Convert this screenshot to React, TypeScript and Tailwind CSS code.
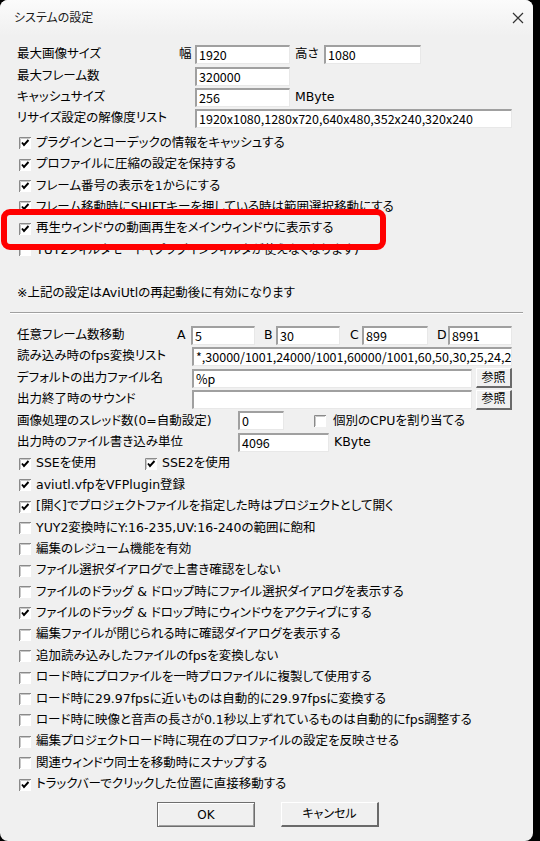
import React from "react";

const Edit = ({ w, value }: { w: string; value?: string }) => (
  <div
    className={`h-[19px] shrink-0 overflow-hidden whitespace-nowrap border-t-2 border-l-2 border-r border-b border-t-[#a0a0a0] border-l-[#a0a0a0] border-r-[#e8e8e8] border-b-[#e8e8e8] bg-white pl-[2px] font-['Noto_Sans_CJK_JP',sans-serif] text-[12.5px] leading-[16px] ${w}`}
  >
    {value}
  </div>
);

const Check = ({ checked }: { checked?: boolean }) => (
  <svg width="12" height="12" viewBox="0 0 12 12" className="shrink-0">
    <rect x="0" y="0" width="12" height="12" fill="#ffffff" />
    <path d="M0.5 12V0.5H12" fill="none" stroke="#8a8a8a" strokeWidth="1" />
    <path d="M1.5 11V1.5H11" fill="none" stroke="#c8c8c8" strokeWidth="1" />
    {checked && (
      <path d="M3 5.5L5 8L9.5 3" fill="none" stroke="#000" strokeWidth="1.9" />
    )}
  </svg>
);

const Row = ({ children, className = "" }: { children: React.ReactNode; className?: string }) => (
  <div className={`flex h-[21.4px] items-center whitespace-nowrap ${className}`}>{children}</div>
);

const CheckRow = ({ checked, label }: { checked?: boolean; label: string }) => (
  <Row className="pl-[19px]">
    <Check checked={checked} />
    <span className="ml-[5px]">{label}</span>
  </Row>
);

const RefButton = () => (
  <div className="ml-[4px] flex h-[20px] w-[36px] items-center justify-center border-t border-l border-r-2 border-b-2 border-t-white border-l-white border-r-[#6a6a6a] border-b-[#6a6a6a] bg-[#f0f0f0] text-[12px]">
    参照
  </div>
);

const lowerChecks: [boolean, string][] = [
  [true, "aviutl.vfpをVFPlugin登録"],
  [true, "[開く]でプロジェクトファイルを指定した時はプロジェクトとして開く"],
  [false, "YUY2変換時にY:16-235,UV:16-240の範囲に飽和"],
  [false, "編集のレジューム機能を有効"],
  [false, "ファイル選択ダイアログで上書き確認をしない"],
  [false, "ファイルのドラッグ & ドロップ時にファイル選択ダイアログを表示する"],
  [true, "ファイルのドラッグ & ドロップ時にウィンドウをアクティブにする"],
  [false, "編集ファイルが閉じられる時に確認ダイアログを表示する"],
  [false, "追加読み込みしたファイルのfpsを変換しない"],
  [false, "ロード時にプロファイルを一時プロファイルに複製して使用する"],
  [false, "ロード時に29.97fpsに近いものは自動的に29.97fpsに変換する"],
  [false, "ロード時に映像と音声の長さが0.1秒以上ずれているものは自動的にfps調整する"],
  [false, "編集プロジェクトロード時に現在のプロファイルの設定を反映させる"],
  [false, "関連ウィンドウ同士を移動時にスナップする"],
  [true, "トラックバーでクリックした位置に直接移動する"],
];

export default function App() {
  return (
    <div className="flex h-[841px] w-[540px] bg-black font-['DejaVu_Sans','Noto_Sans_CJK_JP',sans-serif] text-[12.5px] text-black [font-feature-settings:'palt']">
      <div className="relative h-full w-[533px] overflow-hidden rounded-[8px] bg-[#f0f0f0]">
        {/* title bar */}
        <div className="flex h-[36px] items-center justify-between bg-gradient-to-b from-[#fbfbfb] to-[#f0f0f0] pl-[14px] pr-[8px]">
          <span className="text-[12px] text-[#1a1a1a]">システムの設定</span>
          <svg width="14" height="14" viewBox="0 0 14 14">
            <path d="M2 2L12 12M12 2L2 12" stroke="#333" strokeWidth="1.2" />
          </svg>
        </div>

        <div className="h-[8px]" />
        <Row className="pl-[17px]">
          <span className="w-[162px]">最大画像サイズ</span>
          <span className="w-[16px]">幅</span>
          <Edit w="w-[95px]" value="1920" />
          <span className="w-[34px] pl-[5px]">高さ</span>
          <Edit w="w-[97px]" value="1080" />
        </Row>
        <Row className="pl-[17px]">
          <span className="w-[178px]">最大フレーム数</span>
          <Edit w="w-[95px]" value="320000" />
        </Row>
        <Row className="pl-[17px]">
          <span className="w-[178px]">キャッシュサイズ</span>
          <Edit w="w-[95px]" value="256" />
          <span className="ml-[5px]">MByte</span>
        </Row>
        <Row className="pl-[17px]">
          <span className="w-[178px]">リサイズ設定の解像度リスト</span>
          <Edit w="w-[317px]" value="1920x1080,1280x720,640x480,352x240,320x240" />
        </Row>

        <div className="mt-[3px]">
          <CheckRow checked label="プラグインとコーデックの情報をキャッシュする" />
          <CheckRow checked label="プロファイルに圧縮の設定を保持する" />
          <CheckRow checked label="フレーム番号の表示を1からにする" />
          <CheckRow checked label="フレーム移動時にSHIFTキーを押している時は範囲選択移動にする" />
          <CheckRow checked label="再生ウィンドウの動画再生をメインウィンドウに表示する" />
          <CheckRow label="YUY2フィルタモード (プラグインフィルタが使えなくなります)" />
          <Row>{""}</Row>
          <Row className="pl-[17px]">※上記の設定はAviUtlの再起動後に有効になります</Row>
        </div>

        <div className="mx-[10px] mt-[8px] h-[2px] border-t border-b border-t-[#a0a0a0] border-b-white" />

        <div className="mt-[11px]">
          <Row className="pl-[17px]">
            <span className="w-[160px]">任意フレーム数移動</span>
            <span className="w-[14px]">A</span>
            <Edit w="w-[64px]" value="5" />
            <span className="w-[21px] pl-[9px]">B</span>
            <Edit w="w-[64px]" value="30" />
            <span className="w-[22px] pl-[10px]">C</span>
            <Edit w="w-[66px]" value="899" />
            <span className="w-[20px] pl-[9px]">D</span>
            <Edit w="w-[64px]" value="8991" />
          </Row>
          <Row className="pl-[17px]">
            <span className="w-[175px]">読み込み時のfps変換リスト</span>
            <Edit
              w="w-[320px]"
              value="*,30000/1001,24000/1001,60000/1001,60,50,30,25,24,20,15,12,10"
            />
          </Row>
          <Row className="pl-[17px]">
            <span className="w-[175px]">デフォルトの出力ファイル名</span>
            <Edit w="w-[280px]" value="%p" />
            <RefButton />
          </Row>
          <Row className="pl-[17px]">
            <span className="w-[175px]">出力終了時のサウンド</span>
            <Edit w="w-[280px]" />
            <RefButton />
          </Row>
          <Row className="pl-[17px]">
            <span className="w-[221px]">画像処理のスレッド数(0=自動設定)</span>
            <Edit w="w-[46px]" value="0" />
            <span className="ml-[30px]">
              <Check />
            </span>
            <span className="ml-[7px]">個別のCPUを割り当てる</span>
          </Row>
          <Row className="pl-[17px]">
            <span className="w-[221px]">出力時のファイル書き込み単位</span>
            <Edit w="w-[91px]" value="4096" />
            <span className="ml-[5px]">KByte</span>
          </Row>
          <Row className="pl-[19px]">
            <Check checked />
            <span className="ml-[5px] w-[109px]">SSEを使用</span>
            <Check checked />
            <span className="ml-[5px]">SSE2を使用</span>
          </Row>
          {lowerChecks.map(([c, l]) => (
            <CheckRow key={l} checked={c} label={l} />
          ))}
        </div>

        <div className="mt-[7px] flex text-[12px]">
          <div className="ml-[157px] flex h-[25px] w-[98px] items-center justify-center border border-[#6e6e6e] bg-[#f0f0f0] shadow-[inset_1px_1px_0_#ffffff,inset_-1px_-1px_0_#a0a0a0]">
            OK
          </div>
          <div className="ml-[26px] flex h-[25px] w-[98px] items-center justify-center border-t border-l border-r-2 border-b-2 border-t-white border-l-white border-r-[#6a6a6a] border-b-[#6a6a6a] bg-[#f0f0f0]">
            キャンセル
          </div>
        </div>

        {/* highlight annotation */}
        <div className="absolute left-[1px] top-[209px] h-[41px] w-[385px] rounded-[9px] border-[6px] border-[#ff0000]" />
      </div>
    </div>
  );
}
